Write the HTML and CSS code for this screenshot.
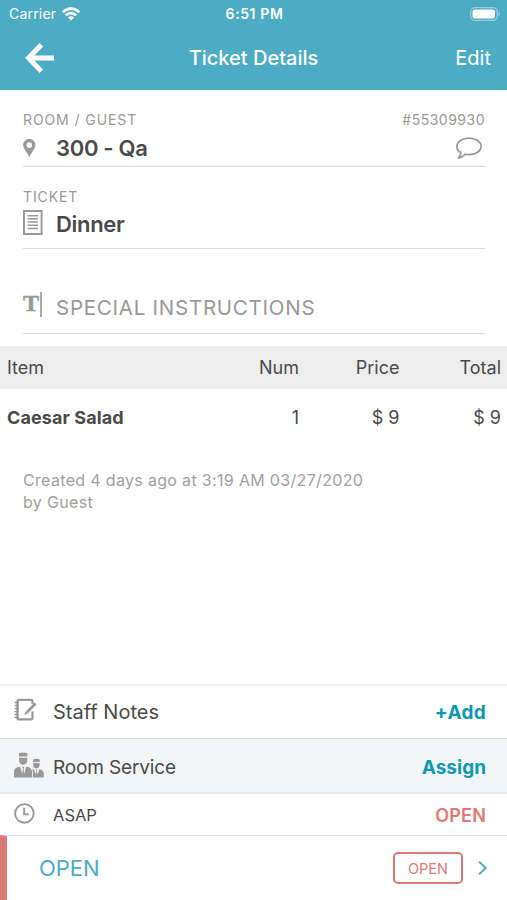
FILE: index.html
```html
<!DOCTYPE html>
<html lang="en">
<head>
  <meta charset="UTF-8" />
  <meta name="viewport" content="width=device-width, initial-scale=1.0"/>
  <title>Ticket Details</title>
  <link rel="stylesheet" href="styles.css">
</head>
<body>

  <header>
    <div class="status-bar">
      <div class="carrier">
        <span>Carrier</span>
        <svg width="18" height="14" viewBox="0 0 18 14" fill="none" stroke="#fff" stroke-width="2.7">
          <path d="M.8 5.2C5.5.4 12.5.4 17.2 5.2" />
          <path d="M3.8 8.3c3-3 7.4-3 10.4 0" />
          <path d="M9 13.6 5.9 10.5c1.8-1.6 4.4-1.6 6.2 0z" fill="#fff" stroke="none" />
        </svg>
      </div>
      <strong class="time">6:51 PM</strong>
      <svg class="battery" width="30" height="14" viewBox="0 0 30 14">
        <rect x=".7" y=".7" width="26.6" height="12.6" rx="4" fill="none" stroke="#fff" stroke-opacity=".42" stroke-width="1.3" />
        <rect x="2.5" y="2.5" width="22.5" height="9" rx="2.2" fill="#fff" />
        <path d="M28.6 4.8c1.5.8 1.5 3.6 0 4.4z" fill="#fff" fill-opacity=".5" />
      </svg>
    </div>
    <div class="nav-bar">
      <svg width="30" height="32" viewBox="0 0 30 32" fill="none" stroke="#fff" stroke-width="5">
        <path d="M16.3 2.8 3.6 16l12.7 13.2M4 16h25" />
      </svg>
      <h1>Ticket Details</h1>
      <a class="edit">Edit</a>
    </div>
  </header>

  <main>
    <section class="field room">
      <div class="field-head">
        <span class="label">ROOM / GUEST</span>
        <span class="number">#55309930</span>
      </div>
      <div class="field-row">
        <span class="field-icon">
          <svg width="13" height="19" viewBox="0 0 13 19" fill="#999">
            <path fill-rule="evenodd" d="M6.3 0C2.8 0 .2 2.7.2 6.1c0 4 4.2 7 6.1 12.4 1.9-5.4 6.1-8.4 6.1-12.4C12.4 2.700 9.800 0 6.300 0zm0 3.300a2.800 2.800 0 1 1 0 5.600 2.800 2.800 0 0 1 0-5.600z" />
          </svg>
        </span>
        <span class="value">300 - Qa</span>
        <svg class="comment" width="28" height="24" viewBox="0 0 28 24" fill="none" stroke="#999" stroke-width="1.7" stroke-linejoin="round">
          <path d="M14 2.2c6.700 0 12.100 3.600 12.100 8.200s-5.400 8.200-12.100 8.200c-1.300 0-2.500-.1-3.600-.4-1.900 1.900-4 3.400-7 3.900 1.500-1.500 2.300-3.400 2.400-5.500C3.400 15.200 1.900 13 1.900 10.400 1.900 5.800 7.300 2.200 14 2.200z" />
        </svg>
      </div>
    </section>

    <section class="field ticket">
      <div class="field-head"><span class="label">TICKET</span></div>
      <div class="field-row">
        <span class="field-icon">
          <svg width="20" height="26" viewBox="0 0 20 26" fill="none" stroke="#999">
            <rect x="1" y="1" width="17.6" height="23" stroke-width="2" />
            <path d="M4.500 5.700h10.600M4.500 8.800h10.600M4.500 12h10.600M4.500 15.200h10.600M4.500 18.400h10.600" stroke-width="1.5" />
          </svg>
        </span>
        <span class="value">Dinner</span>
      </div>
    </section>

    <section class="field special">
      <div class="field-row">
        <span class="field-icon text-icon">T</span>
        <span class="placeholder">SPECIAL INSTRUCTIONS</span>
      </div>
    </section>

    <table>
      <thead>
        <tr><th>Item</th><th>Num</th><th>Price</th><th>Total</th></tr>
      </thead>
      <tbody>
        <tr><td>Caesar Salad</td><td>1</td><td>$ 9</td><td>$ 9</td></tr>
      </tbody>
    </table>

    <p class="created">Created 4 days ago at 3:19 AM 03/27/2020<br>by Guest</p>
  </main>

  <footer>
    <div class="row notes">
      <span class="row-icon">
        <svg width="23" height="24" viewBox="0 0 23 24" fill="none" stroke="#999">
          <path d="M18.500 6V3.400q0-1.500-1.500-1.500H4.900q-1.500 0-1.500 1.500v16.400q0 1.500 1.500 1.500H17q1.500 0 1.500-1.500v-6.300" stroke-width="2.200" />
          <path d="M.5 4.500h4.500M.5 7.500h4.500M.5 10.500h4.500M.5 13.500h4.500M.5 16.500h4.500M.5 19.500h4.500" stroke-width="1.300" />
          <path d="m13 14.200 8.500-8.700" stroke-width="2.800" />
          <path d="m10.500 16.800.9-3.600 2.700 2.600z" fill="#999" stroke="none" />
        </svg>
      </span>
      <span class="row-title">Staff Notes</span>
      <a class="action">+Add</a>
    </div>
    <div class="row service">
      <span class="row-icon">
        <svg width="30" height="26" viewBox="0 0 30 26" fill="#999">
          <path d="M4.800 1.300Q9.200-.3 13.600 1.300L13.300 4.600H5.100zM5.100 5.700h8.200v2.600c0 2.600-1.900 4.500-4.100 4.500s-4.100-1.900-4.100-4.500z" />
          <path d="M0 25.500v-5.600c0-3.200 2-4.500 6.100-5.500l2.100 7.600.7-5.200-.8-1.300.7-1h.8l.7 1-.8 1.300.7 5.200 2.100-7.600c4 1 5.700 2.300 5.700 5.500v5.600z" />
          <path d="M18.900 7.500q3.500-1.400 7 0l-.3 2.600h-6.400zM19.200 11h6.400v1.900c0 2.100-1.400 3.500-3.200 3.500s-3.200-1.400-3.200-3.500z" />
          <path d="M18.800 25.500v-6c0-.9-.2-1.500-.6-2l1.600-.3 2 5.400.6-3.500-.6-1 .5-.7h.6l.5.7-.6 1 .6 3.500 2-5.400c2.700.7 4.400 1.800 4.400 4.400v3.900z" />
        </svg>
      </span>
      <span class="row-title">Room Service</span>
      <a class="action">Assign</a>
    </div>
    <div class="row asap">
      <span class="row-icon">
        <svg width="21" height="21" viewBox="0 0 21 21" fill="none" stroke="#999" stroke-width="1.9">
          <circle cx="10.4" cy="10.4" r="9.300" />
          <path d="M10.200 4.800v6.400h4.600" />
        </svg>
      </span>
      <span class="row-title">ASAP</span>
      <span class="state">OPEN</span>
    </div>
    <div class="row current">
      <span class="current-state">OPEN</span>
      <span class="badge">OPEN</span>
      <svg width="10" height="16" viewBox="0 0 10 16" fill="none" stroke="#4cacc3" stroke-width="2">
        <path d="m1.200 1.800 6.600 6.200-6.600 6.200" />
      </svg>
    </div>
  </footer>

</body>
</html>
```
FILE: styles.css
```css
* {
  box-sizing: border-box;
}

body {
  font-family: Inter, "Liberation Sans", sans-serif;
  background: #fff;
  color: #4a4a4a;
  margin: 0;
  height: 900px;
  display: flex;
  flex-direction: column;
}

svg {
  display: block;
  flex: none;
}

header {
  height: 90px;
  background: #4cacc3;
  color: #fff;
}

.status-bar {
  display: grid;
  grid-template-columns: 1fr auto 1fr;
  align-items: center;
  height: 27px;
  padding: 0 7px 0 9px;
  font-size: 14px;
}

.carrier {
  display: flex;
  align-items: center;
  gap: 6px;
  letter-spacing: 0.2px;
}

.time {
  font-size: 14px;
  font-weight: 600;
  letter-spacing: 0.6px;
}

.battery {
  justify-self: end;
}

.nav-bar {
  display: grid;
  grid-template-columns: 1fr auto 1fr;
  align-items: center;
  height: 62px;
  padding: 0 16px;
}

.nav-bar svg {
  margin-left: 9px;
}

h1 {
  margin: 0;
  font-size: 20px;
  font-weight: 500;
}

.edit {
  justify-self: end;
  font-size: 20px;
}

main {
  flex: 1;
}

.field {
  margin: 0 22px 0 23px;
  border-bottom: 1px solid #dcdcdc;
}

.field-head {
  display: flex;
  justify-content: space-between;
  height: 20px;
  line-height: 20px;
  font-size: 14px;
  color: #999;
}

.label {
  letter-spacing: 0.9px;
}

.number {
  letter-spacing: 0.5px;
}

.field-row {
  display: flex;
  align-items: center;
  height: 28px;
}

.field-icon {
  width: 33px;
  flex: none;
}

.value {
  flex: 1;
  font-size: 22px;
  font-weight: 600;
  letter-spacing: -0.3px;
}

.room {
  height: 77px;
  padding-top: 20px;
}

.room .field-row {
  margin-top: 4px;
}

.comment {
  margin-right: 2px;
}

.ticket {
  height: 82px;
  padding-top: 20px;
}

.ticket .field-row {
  margin-top: 3px;
}

.ticket .field-icon {
  margin-top: -2px;
}

.special {
  height: 85px;
  padding-top: 44px;
}

.text-icon {
  width: 19px;
  height: 25px;
  margin: -5px 14px 0 0;
  border-right: 2px solid #aaa;
  color: #999;
  font: bold 24px/23px "Liberation Serif", serif;
  -webkit-text-stroke: 0.5px #999;
}

.placeholder {
  font-size: 20.5px;
  letter-spacing: 0.75px;
  color: #999;
}

table {
  width: 100%;
  margin-top: 12px;
  table-layout: fixed;
  border-collapse: collapse;
  font-size: 18px;
}

th,
td {
  padding: 0 7px 0 0;
  text-align: right;
  font-weight: 400;
}

th {
  width: 100.5px;
  height: 43px;
  background: #ededed;
}

td {
  height: 57px;
}

th:last-child,
td:last-child {
  padding-right: 6px;
}

th:first-child,
td:first-child {
  width: auto;
  padding-left: 7px;
  text-align: left;
}

td:first-child {
  font-weight: 700;
  letter-spacing: 0.1px;
}

.created {
  margin: 23px 23px 0;
  font-size: 16px;
  line-height: 22px;
  letter-spacing: 0.33px;
  color: #a0a0a0;
}

.row {
  display: flex;
  align-items: center;
  padding: 0 21px 0 14px;
  border-top: 2px solid #efefef;
}

.row-icon {
  width: 39px;
  flex: none;
}

.row-title {
  flex: 1;
  font-size: 20px;
}

.action {
  font-size: 19px;
  font-weight: 700;
  color: #0d98b0;
}

.notes {
  height: 54px;
}

.notes .row-icon {
  margin-top: -4px;
}

.notes .action {
  letter-spacing: 0.3px;
}

.service {
  height: 54px;
  padding-top: 4px;
  background: #f3f5f7;
  border-top: 1px solid #d9dcdd;
}

.service .row-icon {
  margin-top: -6px;
}

.service .row-title {
  font-size: 19px;
  letter-spacing: -0.15px;
}

.asap {
  height: 43px;
  padding-top: 1px;
  border-color: #e8eaeb;
}

.asap .row-icon {
  margin-top: -4px;
}

.asap .row-title {
  font-size: 16.5px;
}

.state {
  font-size: 18px;
  font-weight: 600;
  letter-spacing: 0.2px;
  color: #dc7a77;
}

.current {
  height: 65px;
  padding: 0 19px 0 32px;
  border-top: 1px solid #e6e6e6;
  border-left: 7px solid #dc7a77;
}

.current-state {
  flex: 1;
  font-size: 22px;
  color: #4cacc3;
}

.badge {
  width: 70px;
  height: 32px;
  margin-right: 15px;
  border: 2px solid #dc7a77;
  border-radius: 5px;
  font-size: 14.5px;
  line-height: 29px;
  text-align: center;
  color: #dc7a77;
}
```
